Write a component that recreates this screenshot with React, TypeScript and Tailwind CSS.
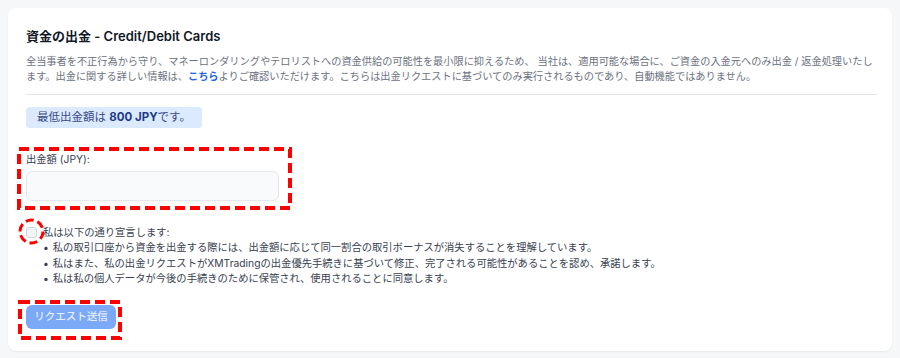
import React from "react";

const font = { fontFamily: 'Inter, "Noto Sans CJK JP", sans-serif' };

const declarations = [
  "私の取引口座から資金を出金する際には、出金額に応じて同一割合の取引ボーナスが消失することを理解しています。",
  "私はまた、私の出金リクエストがXMTradingの出金優先手続きに基づいて修正、完了される可能性があることを認め、承諾します。",
  "私は私の個人データが今後の手続きのために保管され、使用されることに同意します。",
];

export default function App() {
  return (
    <div className="relative w-[900px] h-[358px] bg-[#f6f7f9] pt-2 pl-2" style={font}>
      <div className="w-[884px] h-[343px] bg-white rounded-lg shadow-[0_1px_2px_rgba(0,0,0,0.06)] px-[18px] pt-[18px]">
        <h2 className="text-[13px] leading-5 font-semibold text-[#111827]">資金の出金 - Credit/Debit Cards</h2>
        <p className="mt-2 mr-[-6px] text-[10.2px] leading-[15px] text-[#6b7280]">
          全当事者を不正行為から守り、マネーロンダリングやテロリストへの資金供給の可能性を最小限に抑えるため、 当社は、適用可能な場合に、ご資金の入金元へのみ出金 / 返金処理いたし
          <br />
          ます。出金に関する詳しい情報は、<a className="text-[#2563eb] font-semibold">こちら</a>よりご確認いただけます。こちらは出金リクエストに基づいてのみ実行されるものであり、自動機能ではありません。
        </p>
        <div className="mt-[10px] mr-[-3px] border-t border-[#e5e7eb]" />
        <div className="mt-3 inline-flex items-center h-[21px] px-[11px] rounded bg-[#dbeafe] text-[11.5px] text-[#3b4a86]">
          最低出金額は&nbsp;<span className="font-bold text-[#1e3a8a]">800 JPY</span>です。
        </div>
        <label className="block mt-6 text-[10.3px] leading-[15px] text-[#374151]">出金額 (JPY):</label>
        <div className="mt-[4px] w-[253px] h-[30px] rounded-md border border-[#e5e7eb] bg-[#f9fafb]" />
        <div className="mt-[24px] flex items-center gap-[6px] text-[10.3px] leading-[15px] text-[#374151]">
          <span className="w-[11px] h-[11px] rounded-[3px] border border-[#d1d5db] bg-[#f3f4f6]" />
          <span>私は以下の通り宣言します:</span>
        </div>
        <ul className="ml-[17px] text-[10.3px] leading-[15.5px] text-[#374151]">
          {declarations.map((d) => (
            <li key={d} className="flex gap-[4px]">
              <span>•</span>
              <span>{d}</span>
            </li>
          ))}
        </ul>
        <button className="mt-[18px] h-[24px] w-[90px] rounded-md bg-[#7ba8f7] text-white/80 text-[10.5px] font-medium" style={font}>
          リクエスト送信
        </button>
      </div>
      <svg className="absolute inset-0 pointer-events-none" width="900" height="358">
        <rect x="19" y="149" width="271" height="59" fill="none" stroke="#ff0000" strokeWidth="4" strokeDasharray="10 5" />
        <circle cx="31.5" cy="231.5" r="11.5" fill="none" stroke="#ff0000" strokeWidth="3" strokeDasharray="8 4" />
        <rect x="20" y="302" width="100" height="36" fill="none" stroke="#ff0000" strokeWidth="4" strokeDasharray="10 5" />
      </svg>
    </div>
  );
}
